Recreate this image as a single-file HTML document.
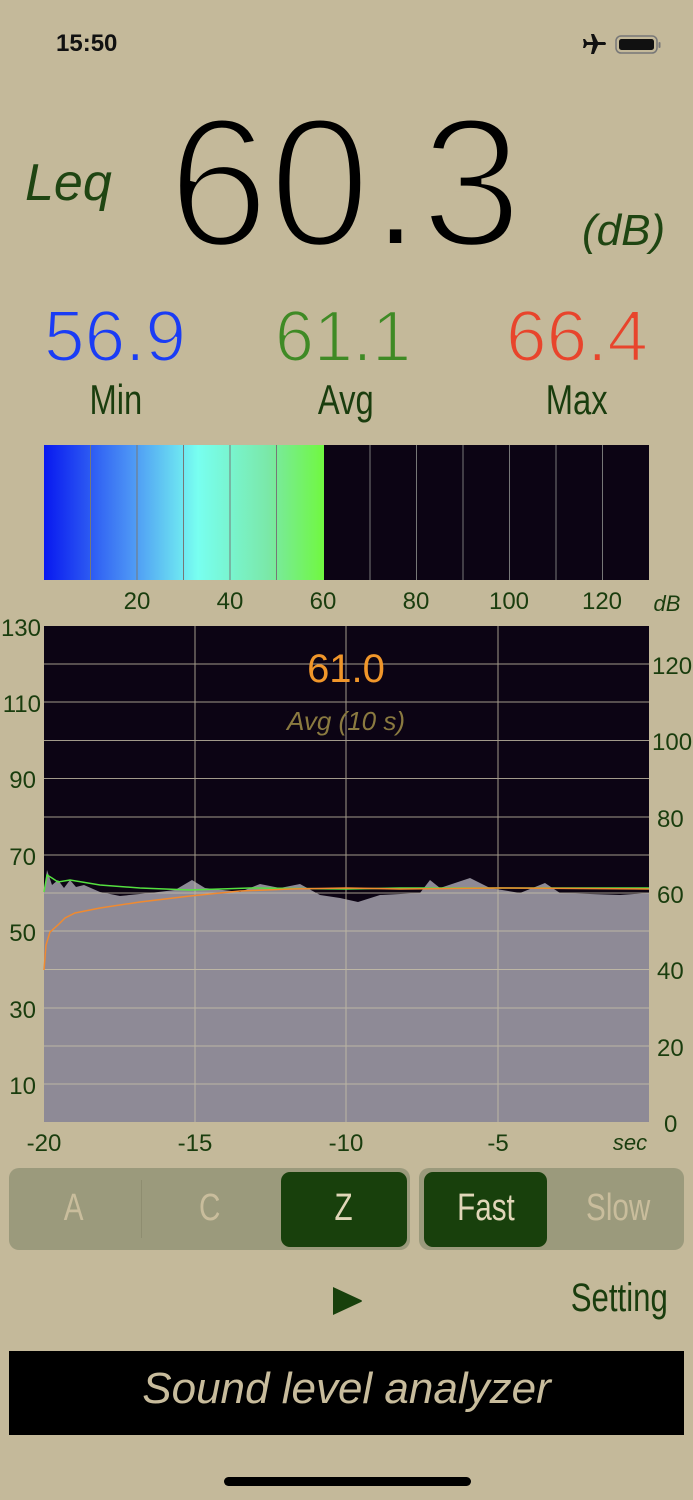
<!DOCTYPE html>
<html><head><meta charset="utf-8"><style>
html,body{margin:0;padding:0}
body{width:693px;height:1500px;background:#c4b99a;position:relative;overflow:hidden;font-family:"Liberation Sans",sans-serif}
.a{position:absolute;white-space:nowrap}
.cn{display:inline-block;transform:scaleX(.78);transform-origin:center}
</style></head><body>
<div class="a" style="left:56px;top:30px;font-size:24px;font-weight:bold;color:#111">15:50</div>
<svg class="a" style="left:578px;top:32px" width="84" height="26" viewBox="0 0 84 26">
<path d="M13 2 L16 2 L20 10 L27 10 Q29 12 27 13 L20 13 L16 22 L13 22 L15 13 L9 13 L7 16 L5 16 L6 11.5 L5 7 L7 7 L9 10 L15 10 Z" fill="#111"/>
<rect x="38" y="4" width="41" height="17" rx="5" fill="none" stroke="#777" stroke-width="1.5"/>
<rect x="41" y="7" width="35" height="11" rx="2.5" fill="#111"/>
<rect x="80.5" y="10" width="2" height="6" rx="1" fill="#777"/>
</svg>
<svg class="a" style="left:0;top:80px" width="693" height="360" viewBox="0 80 693 360">
<text x="25" y="200" font-size="52" font-style="italic" fill="#1f4512">Leq</text>
<text x="168" y="246" font-size="184" fill="#000" stroke="#c4b99a" stroke-width="6" paint-order="normal" textLength="354" lengthAdjust="spacingAndGlyphs">60.3</text>
<text x="582" y="245" font-size="44" font-style="italic" fill="#1f4512">(dB)</text>
<text x="44" y="361" font-size="72" fill="#1a3cf5" stroke="#c4b99a" stroke-width="2" textLength="142" lengthAdjust="spacingAndGlyphs">56.9</text>
<text x="275" y="361" font-size="72" fill="#3f8a25" stroke="#c4b99a" stroke-width="2" textLength="136" lengthAdjust="spacingAndGlyphs">61.1</text>
<text x="506" y="361" font-size="72" fill="#e8442c" stroke="#c4b99a" stroke-width="2" textLength="142" lengthAdjust="spacingAndGlyphs">66.4</text>
</svg>
<div class="a" style="left:66px;top:376px;width:100px;text-align:center;font-size:42px;color:#1a3d0e"><span class="cn">Min</span></div>
<div class="a" style="left:296px;top:376px;width:100px;text-align:center;font-size:42px;color:#1a3d0e"><span class="cn">Avg</span></div>
<div class="a" style="left:527px;top:376px;width:100px;text-align:center;font-size:42px;color:#1a3d0e"><span class="cn">Max</span></div>

<svg class="a" style="left:0;top:440px" width="693" height="720" viewBox="0 440 693 720">
<defs><linearGradient id="g" x1="44" x2="324" gradientUnits="userSpaceOnUse">
<stop offset="0" stop-color="#0818f0"/><stop offset=".3" stop-color="#4a90f5"/><stop offset=".55" stop-color="#78fff0"/><stop offset=".8" stop-color="#7ae8a8"/><stop offset="1" stop-color="#70f840"/></linearGradient></defs>
<rect x="44" y="445" width="605" height="135" fill="#0c0414"/>
<rect x="44" y="445" width="280" height="135" fill="url(#g)"/>
<g stroke="#777" stroke-width="1">
<line x1="90.5" y1="445" x2="90.5" y2="580"/><line x1="137" y1="445" x2="137" y2="580"/><line x1="183.5" y1="445" x2="183.5" y2="580"/><line x1="230" y1="445" x2="230" y2="580"/><line x1="276.5" y1="445" x2="276.5" y2="580"/><line x1="370" y1="445" x2="370" y2="580"/><line x1="416.5" y1="445" x2="416.5" y2="580"/><line x1="463" y1="445" x2="463" y2="580"/><line x1="509.5" y1="445" x2="509.5" y2="580"/><line x1="556" y1="445" x2="556" y2="580"/><line x1="602.5" y1="445" x2="602.5" y2="580"/></g>
<g font-size="24" fill="#1a3d0e" text-anchor="middle">
<text x="137" y="609">20</text><text x="230" y="609">40</text><text x="323" y="609">60</text><text x="416" y="609">80</text><text x="509" y="609">100</text><text x="602" y="609">120</text></g>
<text x="667" y="611" font-size="22" font-style="italic" fill="#1a3d0e" text-anchor="middle">dB</text>

<rect x="44" y="626" width="605" height="496" fill="#0c0414"/>
<path d="M44 893 L47 870 L52 885 L58 880 L64 888 L70 880 L76 887 L84 885 L100 892 L120 896 L150 893 L175 890 L192 880 L205 888 L240 892 L260 884 L280 888 L300 884 L320 895 L340 898 L358 902 L380 895 L420 893 L430 880 L440 888 L470 878 L490 888 L520 893 L545 883 L560 893 L620 895 L649 893 L649 1122 L44 1122 Z" fill="#8e8a96"/>
<g stroke="#c8c0a8" stroke-width="1" opacity=".8">
<line x1="44" y1="664" x2="649" y2="664"/><line x1="44" y1="702" x2="649" y2="702"/><line x1="44" y1="740.5" x2="649" y2="740.5"/><line x1="44" y1="778.5" x2="649" y2="778.5"/><line x1="44" y1="817" x2="649" y2="817"/><line x1="44" y1="855" x2="649" y2="855"/><line x1="44" y1="893" x2="649" y2="893"/><line x1="44" y1="931" x2="649" y2="931"/><line x1="44" y1="969.5" x2="649" y2="969.5"/><line x1="44" y1="1008" x2="649" y2="1008"/><line x1="44" y1="1046" x2="649" y2="1046"/><line x1="44" y1="1084" x2="649" y2="1084"/>
<line x1="195" y1="626" x2="195" y2="1122"/><line x1="346" y1="626" x2="346" y2="1122"/><line x1="498" y1="626" x2="498" y2="1122"/></g>
<path d="M44 892 L47 875 L52 878 L58 882 L70 880 L100 885 L140 888 L190 890 L250 888 L346 889 L400 888 L500 888 L649 888" fill="none" stroke="#55e040" stroke-width="1.5"/>
<path d="M44 970 L46 945 L50 932 L58 925 L65 918 L75 913 L100 908 L140 902 L190 896 L240 891 L290 889 L346 888 L400 889 L500 888 L649 889" fill="none" stroke="#f08a30" stroke-width="1.5"/>
<text x="346" y="682" font-size="40" fill="#f0962a" text-anchor="middle">61.0</text>
<text x="346" y="730" font-size="26" font-style="italic" fill="#8a7a40" text-anchor="middle">Avg (10 s)</text>
<g font-size="24" fill="#1a3d0e" text-anchor="end">
<text x="41" y="636">130</text><text x="41" y="712">110</text><text x="36" y="788">90</text><text x="36" y="865">70</text><text x="36" y="941">50</text><text x="36" y="1018">30</text><text x="36" y="1094">10</text></g>
<g font-size="24" fill="#1a3d0e" text-anchor="start">
<text x="652" y="674">120</text><text x="652" y="750">100</text><text x="657" y="827">80</text><text x="657" y="903">60</text><text x="657" y="979">40</text><text x="657" y="1056">20</text><text x="664" y="1132">0</text></g>
<g font-size="24" fill="#1a3d0e" text-anchor="middle">
<text x="44" y="1151">-20</text><text x="195" y="1151">-15</text><text x="346" y="1151">-10</text><text x="498" y="1151">-5</text></g>
<text x="630" y="1150" font-size="22" font-style="italic" fill="#1a3d0e" text-anchor="middle">sec</text>
</svg>

<div class="a" style="left:9px;top:1168px;width:401px;height:82px;border-radius:10px;background:#9b9a7c"></div>
<div class="a" style="left:141px;top:1180px;width:1px;height:58px;background:#8e8d70"></div>
<div class="a" style="left:281px;top:1172px;width:126px;height:75px;border-radius:9px;background:#18400c"></div>
<div class="a" style="left:419px;top:1168px;width:265px;height:82px;border-radius:10px;background:#9b9a7c"></div>
<div class="a" style="left:424px;top:1172px;width:123px;height:75px;border-radius:9px;background:#18400c"></div>
<div class="a" style="left:9px;top:1187px;width:130px;text-align:center;font-size:38px;color:#c9bd9c"><span class="cn">A</span></div>
<div class="a" style="left:143px;top:1187px;width:134px;text-align:center;font-size:38px;color:#c9bd9c"><span class="cn">C</span></div>
<div class="a" style="left:281px;top:1187px;width:126px;text-align:center;font-size:38px;color:#e0d6b8"><span class="cn">Z</span></div>
<div class="a" style="left:424px;top:1187px;width:123px;text-align:center;font-size:38px;color:#e0d6b8"><span class="cn">Fast</span></div>
<div class="a" style="left:552px;top:1187px;width:132px;text-align:center;font-size:38px;color:#c9bd9c"><span class="cn">Slow</span></div>

<svg class="a" style="left:330px;top:1285px" width="34" height="32"><path d="M3 2 L31 15 Q33 16 31 17 L3 30 Z" fill="#18400c"/></svg>
<div class="a" style="left:554px;top:1276px;width:130px;text-align:center;font-size:40px;color:#1a3d0e"><span class="cn">Setting</span></div>

<div class="a" style="left:9px;top:1351px;width:675px;height:84px;background:#000"></div>
<div class="a" style="left:9px;top:1364px;width:675px;text-align:center;font-size:44px;font-style:italic;color:#c8bc9c">Sound level analyzer</div>
<div class="a" style="left:224px;top:1477px;width:247px;height:9px;border-radius:5px;background:#000"></div>
</body></html>
